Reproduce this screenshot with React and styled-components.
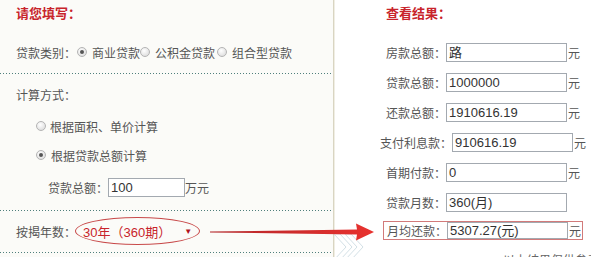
import React from "react";
import styled, { createGlobalStyle } from "styled-components";

const GlobalStyle = createGlobalStyle`
  html, body {
    margin: 0;
    padding: 0;
    background: #ffffff;
    overflow: hidden;
  }
  body {
    font-family: "Liberation Sans", "Noto Sans CJK SC", sans-serif;
    font-size: 12px;
    color: #555;
  }
`;

const cjk = `"Liberation Sans", "Noto Sans CJK SC", sans-serif`;

const Page = styled.div`
  position: relative;
  display: flex;
  width: 591px;
  height: 257px;
  overflow: hidden;
`;

const LeftPanel = styled.div`
  flex: none;
  width: 333px;
  background: #fbfbf8;
  border-right: 1px solid #d9d5c2;
  box-shadow: 1px 0 0 #f0eee4;
`;

const Section = styled.div`
  padding: ${(p) => p.$pad || "0"};
  padding-left: 16px;
`;

const Title = styled.div`
  font-family: ${cjk};
  font-size: 13px;
  line-height: 16px;
  font-weight: bold;
  color: #c8242b;
`;

const Line = styled.div`
  display: flex;
  align-items: center;
  height: ${(p) => p.$h || 16}px;
  margin-top: ${(p) => p.$mt || 0}px;
  margin-left: ${(p) => p.$ml || 0}px;
  font-family: ${cjk};
  font-size: 12px;
  color: #555;
  white-space: nowrap;
`;

const Dots = styled.div`
  height: 1px;
  background: repeating-linear-gradient(
    to right,
    #4f7f7c 0 1px,
    transparent 1px 3px
  );
`;

const Radio = styled.span`
  flex: none;
  box-sizing: border-box;
  width: 10px;
  height: 10px;
  border-radius: 50%;
  border: 1px solid #b4b4b4;
  background: radial-gradient(circle at 40% 35%, #ffffff 0, #e2e2e2 70%);
  margin: 0 ${(p) => p.$mr || 4}px 0 ${(p) => p.$ml || 0}px;
  position: relative;
  &::after {
    content: "";
    display: ${(p) => (p.$checked ? "block" : "none")};
    position: absolute;
    left: 2px;
    top: 2px;
    width: 4px;
    height: 4px;
    border-radius: 50%;
    background: #555;
  }
`;

const Input = styled.div`
  flex: none;
  box-sizing: border-box;
  width: ${(p) => p.$w || 121}px;
  height: ${(p) => p.$h || 19}px;
  border: 1px solid #a3a9b0;
  background: #fff;
  padding-left: 2px;
  font-family: ${cjk};
  font-size: 13px;
  line-height: ${(p) => (p.$h || 19) - 2}px;
  color: #333;
`;

const Ellipse = styled.span`
  display: flex;
  align-items: center;
  box-sizing: border-box;
  width: 125px;
  height: 28px;
  margin-left: -1px;
  padding-left: 7px;
  border: 1px solid #c84a4a;
  border-radius: 50%;
  color: #c8242b;
  font-size: 13px;
`;

const Caret = styled.span`
  margin-left: 13px;
  font-size: 8px;
  color: #b0121c;
`;

const RightPanel = styled.div`
  flex: none;
  width: 298px;
  display: flex;
  flex-direction: column;
  align-items: center;
  gap: 11px;
  padding-top: 6px;
`;

const RightTitle = styled(Title)`
  align-self: flex-start;
  margin-left: 52px;
  margin-bottom: 10px;
`;

const ResultRow = styled.div`
  display: flex;
  align-items: center;
  height: ${(p) => (p.$boxed ? 21 : 19)}px;
  box-sizing: border-box;
  padding: ${(p) => (p.$boxed ? "0 1px 0 3px" : "0")};
  border: ${(p) => (p.$boxed ? "1px solid #d27a7a" : "none")};
  margin-top: ${(p) => (p.$boxed ? -2 : 0)}px;
  font-family: ${cjk};
  font-size: 12px;
  color: #555;
  white-space: nowrap;
`;

const Unit = styled.span`
  margin-left: 1px;
  visibility: ${(p) => (p.$hidden ? "hidden" : "visible")};
`;

const Note = styled.div`
  align-self: flex-start;
  margin-left: 169px;
  font-family: ${cjk};
  font-size: 12px;
  color: #666;
  white-space: nowrap;
`;

const Arrow = styled.svg`
  position: absolute;
  left: 205px;
  top: 218px;
`;

const Chevrons = styled.svg`
  position: absolute;
  left: 332px;
  top: 233px;
`;

const results = [
  { label: "房款总额：", value: "路" },
  { label: "贷款总额：", value: "1000000" },
  { label: "还款总额：", value: "1910616.19" },
  { label: "支付利息款：", value: "910616.19" },
  { label: "首期付款：", value: "0" },
  { label: "贷款月数：", value: "360(月)", noUnit: true },
];

export default function App() {
  return (
    <Page>
      <GlobalStyle />
      <LeftPanel>
        <Section $pad="6px 0 11px">
          <Title>请您填写：</Title>
          <Line $h={20} $mt={20}>
            贷款类别：
            <Radio $checked $ml={1} $mr={5} />
            商业贷款
            <Radio $mr={5} />
            公积金贷款
            <Radio $ml={2} $mr={5} />
            组合型贷款
          </Line>
        </Section>
        <Dots />
        <Section $pad="12px 0 13px">
          <Line>计算方式：</Line>
          <Line $mt={16} $ml={20}>
            <Radio />
            根据面积、单价计算
          </Line>
          <Line $mt={13} $ml={20}>
            <Radio $checked $mr={5} />
            根据贷款总额计算
          </Line>
          <Line $h={19} $mt={15} $ml={32}>
            贷款总额：
            <Input $w={77}>100</Input>
            万元
          </Line>
        </Section>
        <Dots />
        <Section $pad="6px 0 7px">
          <Line $h={28}>
            按揭年数：
            <Ellipse>
              30年（360期）
              <Caret>▼</Caret>
            </Ellipse>
          </Line>
        </Section>
        <Dots />
      </LeftPanel>

      <RightPanel>
        <RightTitle>查看结果：</RightTitle>
        {results.map((r) => (
          <ResultRow key={r.label}>
            {r.label}
            <Input>{r.value}</Input>
            <Unit $hidden={r.noUnit}>元</Unit>
          </ResultRow>
        ))}
        <ResultRow $boxed>
          月均还款：
          <Input $h={17}>5307.27(元)</Input>
          <Unit>元</Unit>
        </ResultRow>
        <Note>以上结果仅供参考</Note>
      </RightPanel>

      <Chevrons width="36" height="30" viewBox="0 0 36 30">
        <polyline
          points="2,1 8,1 20,14 8,27 2,27 14,14 2,1"
          fill="#ffffff"
          stroke="#d3e0e6"
          strokeWidth="1"
        />
        <polyline
          points="13,1 19,1 31,14 19,27 13,27 25,14 13,1"
          fill="#ffffff"
          stroke="#d3e0e6"
          strokeWidth="1"
        />
      </Chevrons>

      <Arrow width="175" height="30" viewBox="0 0 175 30">
        <defs>
          <linearGradient id="arrowFill" x1="0" x2="1" y1="0" y2="0">
            <stop offset="0" stopColor="#b3262a" />
            <stop offset="1" stopColor="#e8322f" />
          </linearGradient>
        </defs>
        <polygon
          points="5,13.6 152,11.5 151,5.5 169,14 151,22.5 152,16.5 5,14.4"
          fill="url(#arrowFill)"
        />
      </Arrow>
    </Page>
  );
}
